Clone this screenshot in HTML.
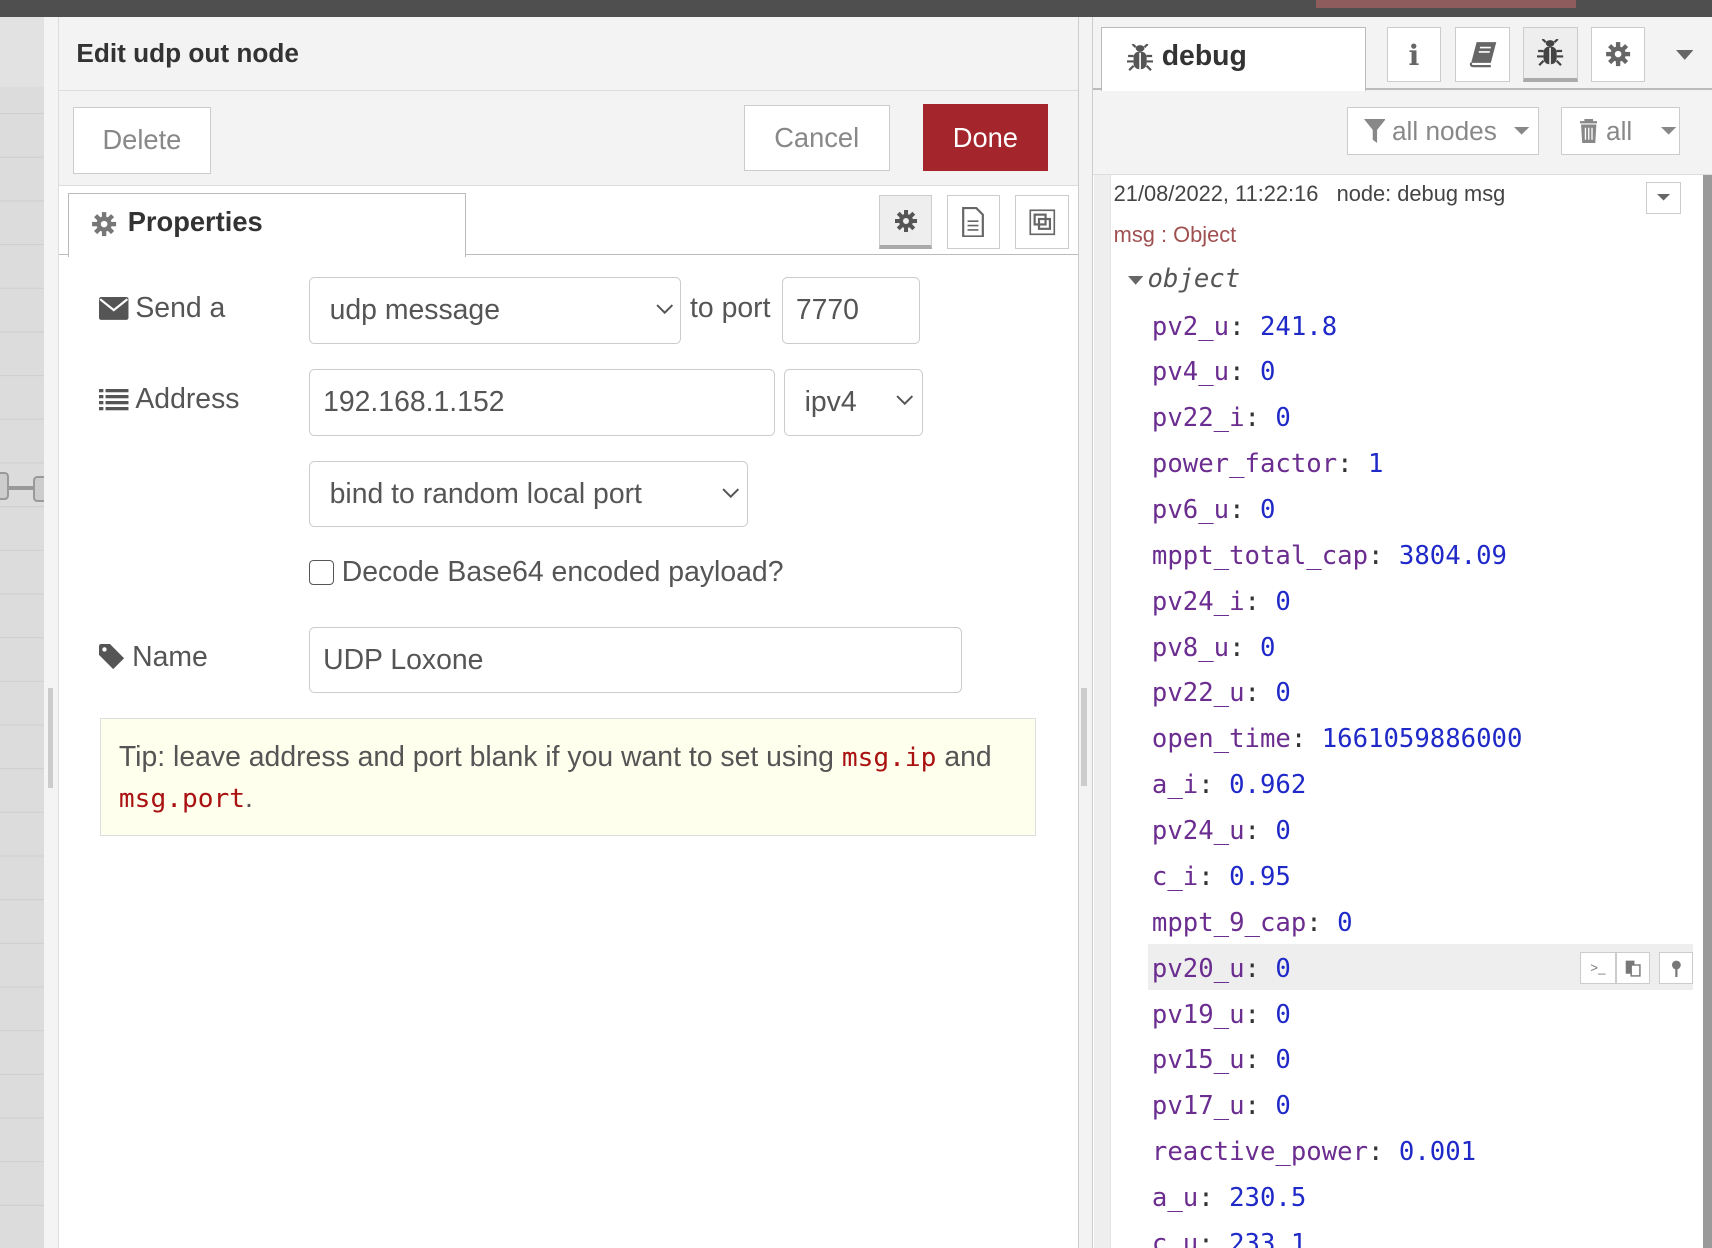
<!DOCTYPE html>
<html><head><style>
html,body{margin:0;padding:0;overflow:hidden;}
body{width:1568px;height:1143px;overflow:hidden;zoom:1.09184;font-family:"Liberation Sans",sans-serif;position:relative;background:#fff;color:#555;}
.a{position:absolute;box-sizing:border-box;}
.btn{border:1px solid #ccc;background:#fff;color:#888;font-size:25px;display:flex;align-items:center;justify-content:center;}
.inp{border:1px solid #ccc;border-radius:5px;background:#fff;font-size:26px;color:#555;display:flex;align-items:center;padding-left:18px;}
.lbl{font-size:26px;color:#555;}
.mono{font-family:"DejaVu Sans Mono","Liberation Mono",monospace;font-size:23.5px;}
.k{color:#6b2d8f}.v{color:#1f29c8}.c{color:#333}
.ib{border:1px solid #ccc;background:#fff;display:flex;align-items:center;justify-content:center;}
</style></head><body>
<div class="a" style="left:0;top:0;width:1568px;height:16px;background:#4f4f4f"></div>
<div class="a" style="left:1205px;top:0;width:238px;height:7px;background:#8e5c5c"></div>
<div class="a" style="left:0;top:16px;width:40px;height:1127px;background:#dcdcdc;background-image:linear-gradient(#cfcfcf 1px,transparent 1px);background-size:40px 40px;background-position:0 8px"></div>
<div class="a" style="left:0;top:16px;width:40px;height:64px;background:#e2e2e2"></div>
<div class="a" style="left:0;top:445px;width:40px;height:4px;background:#999"></div>
<div class="a" style="left:-6px;top:432px;width:14px;height:26px;border:2px solid #999;border-radius:4px;background:#ccc"></div>
<div class="a" style="left:30px;top:436px;width:14px;height:24px;border:2px solid #999;border-radius:4px;background:#ccc"></div>
<div class="a" style="left:40px;top:16px;width:14px;height:1127px;background:#f4f4f4;border-right:1px solid #ddd"></div>
<div class="a" style="left:44px;top:630px;width:5px;height:92px;background:#ccc"></div>
<div class="a" style="left:54px;top:16px;width:933px;height:154px;background:#f3f3f3;border-bottom:1px solid #ddd"></div>
<div class="a" style="left:54px;top:82px;width:933px;height:1px;background:#ddd"></div>
<div class="a" style="left:70px;top:35px;font-size:24px;font-weight:bold;color:#333">Edit udp out node</div>
<div class="a btn" style="left:67px;top:98px;width:126px;height:61px">Delete</div>
<div class="a btn" style="left:681px;top:96px;width:134px;height:61px">Cancel</div>
<div class="a btn" style="left:845px;top:95px;width:115px;height:62px;background:#a4262c;border-color:#a4262c;color:#fff">Done</div>
<div class="a" style="left:54px;top:233px;width:933px;height:1px;background:#bbb"></div>
<div class="a" style="left:62px;top:177px;width:365px;height:58px;background:#fff;border:1px solid #bbb;border-bottom:none"></div>
<svg class="a" style="left:83px;top:193px" width="24" height="24" viewBox="0 0 24 24"><g fill="#777"><circle cx="12" cy="12" r="7"/><rect x="10" y="1" width="4" height="22"/><rect x="1" y="10" width="22" height="4"/><rect x="10" y="1" width="4" height="22" transform="rotate(45 12 12)"/><rect x="10" y="1" width="4" height="22" transform="rotate(-45 12 12)"/></g><circle cx="12" cy="12" r="3" fill="#fff"/></svg>
<div class="a" style="left:117px;top:189px;font-size:25px;font-weight:bold;color:#333">Properties</div>
<div class="a ib" style="left:805px;top:179px;width:49px;height:49px;background:#eee;border-bottom:4px solid #aaa"><svg width="22" height="22" viewBox="0 0 24 24"><g fill="#555"><circle cx="12" cy="12" r="7"/><rect x="10" y="1" width="4" height="22"/><rect x="1" y="10" width="22" height="4"/><rect x="10" y="1" width="4" height="22" transform="rotate(45 12 12)"/><rect x="10" y="1" width="4" height="22" transform="rotate(-45 12 12)"/></g><circle cx="12" cy="12" r="3" fill="#eee"/></svg></div>
<div class="a ib" style="left:867px;top:179px;width:49px;height:49px"><svg width="22" height="28" viewBox="0 0 22 28"><path d="M2 1h12l6 6v20H2z" fill="none" stroke="#666" stroke-width="2"/><path d="M6 13h10M6 17h10M6 21h10" stroke="#666" stroke-width="1.5"/></svg></div>
<div class="a ib" style="left:930px;top:179px;width:49px;height:49px"><svg width="28" height="28" viewBox="0 0 28 28"><rect x="3" y="3" width="22" height="22" fill="none" stroke="#666" stroke-width="1.5"/><rect x="7" y="7" width="10" height="9" fill="none" stroke="#666" stroke-width="2"/><rect x="11" y="11" width="10" height="9" fill="none" stroke="#666" stroke-width="2"/></svg></div>
<svg class="a" style="left:91px;top:272px" width="27" height="21" viewBox="0 0 27 21"><rect width="27" height="21" rx="2" fill="#555"/><path d="M1 2l12.5 10L26 2" fill="none" stroke="#fff" stroke-width="2"/></svg>
<div class="a lbl" style="left:124px;top:267px">Send a</div>
<div class="a inp" style="left:283px;top:254px;width:341px;height:61px">udp message</div>
<div class="a lbl" style="left:632px;top:267px">to port</div>
<div class="a inp" style="left:716px;top:254px;width:127px;height:61px;padding-left:12px">7770</div>
<svg class="a" style="left:91px;top:356px" width="27" height="20" viewBox="0 0 27 20"><g fill="#555"><rect x="0" y="0" width="4" height="3"/><rect x="6" y="0" width="21" height="3"/><rect x="0" y="5.5" width="4" height="3"/><rect x="6" y="5.5" width="21" height="3"/><rect x="0" y="11" width="4" height="3"/><rect x="6" y="11" width="21" height="3"/><rect x="0" y="16.5" width="4" height="3"/><rect x="6" y="16.5" width="21" height="3"/></g></svg>
<div class="a lbl" style="left:124px;top:351px">Address</div>
<div class="a inp" style="left:283px;top:338px;width:427px;height:61px;padding-left:12px">192.168.1.152</div>
<div class="a inp" style="left:718px;top:338px;width:127px;height:61px">ipv4</div>
<div class="a inp" style="left:283px;top:422px;width:402px;height:61px">bind to random local port</div>
<svg class="a" style="left:601px;top:278px" width="16" height="10"><path d="M1 1l7 7 7-7" fill="none" stroke="#555" stroke-width="1.8"/></svg>
<svg class="a" style="left:821px;top:362px" width="16" height="10"><path d="M1 1l7 7 7-7" fill="none" stroke="#555" stroke-width="1.8"/></svg>
<svg class="a" style="left:661px;top:447px" width="16" height="10"><path d="M1 1l7 7 7-7" fill="none" stroke="#555" stroke-width="1.8"/></svg>
<div class="a" style="left:283px;top:513px;width:23px;height:23px;border:1.5px solid #555;border-radius:4px;background:#fff"></div>
<div class="a lbl" style="left:313px;top:509px">Decode Base64 encoded payload?</div>
<svg class="a" style="left:91px;top:590px" width="24" height="24" viewBox="0 0 24 24"><path d="M0 2a2 2 0 0 1 2-2h8l13 13-10 10L0 10z" fill="#555"/><circle cx="5" cy="5" r="2" fill="#fff"/></svg>
<div class="a lbl" style="left:121px;top:587px">Name</div>
<div class="a inp" style="left:283px;top:574px;width:598px;height:61px;padding-left:12px">UDP Loxone</div>
<div class="a" style="left:92px;top:658px;width:857px;height:108px;background:#ffffee;border:1px solid #ddd;padding:16px 16px;font-size:26px;line-height:37px;color:#555">Tip: leave address and port blank if you want to set using <span style="font-family:'DejaVu Sans Mono',monospace;color:#a11;font-size:24px">msg.ip</span> and <span style="font-family:'DejaVu Sans Mono',monospace;color:#a11;font-size:24px">msg.port</span>.</div>
<div class="a" style="left:987px;top:16px;width:14px;height:1127px;background:#f3f3f3;border-left:1px solid #ccc;border-right:1px solid #ccc"></div>
<div class="a" style="left:990px;top:630px;width:6px;height:90px;background:#ccc"></div>
<div class="a" style="left:1001px;top:16px;width:567px;height:144px;background:#f3f3f3;border-bottom:1px solid #ddd"></div>
<div class="a" style="left:1001px;top:81px;width:567px;height:1px;background:#bbb"></div>
<div class="a" style="left:1008px;top:25px;width:243px;height:58px;background:#fff;border:1px solid #bbb;border-bottom:none"></div>
<svg class="a" style="left:1032px;top:40px" width="24" height="26" viewBox="0 0 24 26"><g fill="#555"><ellipse cx="12" cy="4" rx="4" ry="3"/><rect x="6" y="7" width="12" height="16" rx="5"/></g><path d="M12 8v15" stroke="#fff" stroke-width="1.5"/><path d="M6 11H1M6 16H0M6 20l-4 4M18 11h5M18 16h6M18 20l4 4M8 3L5 0M16 3l3-3" stroke="#555" stroke-width="2"/></svg>
<div class="a" style="left:1064px;top:37px;font-size:26px;font-weight:bold;color:#333">debug</div>
<div class="a ib" style="left:1270px;top:25px;width:50px;height:50px;font-family:'DejaVu Serif',serif;font-weight:bold;font-size:26px;color:#666">i</div>
<div class="a ib" style="left:1333px;top:25px;width:50px;height:50px"><svg width="26" height="24" viewBox="0 0 26 24"><path d="M7 1h18l-5 19H2z" fill="#666"/><path d="M2 20q-1 3 2 3h16" fill="none" stroke="#666" stroke-width="2"/><path d="M10 6h10M9 10h10" stroke="#fff" stroke-width="1.5"/></svg></div>
<div class="a ib" style="left:1395px;top:25px;width:50px;height:50px;background:#eee;border-bottom:4px solid #aaa"><svg width="24" height="26" viewBox="0 0 24 26"><g fill="#444"><ellipse cx="12" cy="4" rx="4" ry="3"/><rect x="6" y="7" width="12" height="16" rx="5"/></g><path d="M12 8v15" stroke="#eee" stroke-width="1.5"/><path d="M6 11H1M6 16H0M6 20l-4 4M18 11h5M18 16h6M18 20l4 4M8 3L5 0M16 3l3-3" stroke="#444" stroke-width="2"/></svg></div>
<div class="a ib" style="left:1457px;top:25px;width:50px;height:50px"><svg width="24" height="24" viewBox="0 0 24 24"><g fill="#666"><circle cx="12" cy="12" r="7"/><rect x="10" y="1" width="4" height="22"/><rect x="1" y="10" width="22" height="4"/><rect x="10" y="1" width="4" height="22" transform="rotate(45 12 12)"/><rect x="10" y="1" width="4" height="22" transform="rotate(-45 12 12)"/></g><circle cx="12" cy="12" r="3" fill="#fff"/></svg></div>
<svg class="a" style="left:1535px;top:46px" width="16" height="10"><path d="M0 0h16L8 9z" fill="#666"/></svg>
<div class="a ib" style="left:1234px;top:98px;width:176px;height:44px;color:#888;font-size:24px;justify-content:flex-start;padding-left:14px"><svg width="20" height="22" viewBox="0 0 20 22" style="margin-right:6px"><path d="M0 0h20l-8 10v12l-4-3v-9z" fill="#888"/></svg>all nodes<svg width="14" height="8" style="margin-left:16px"><path d="M0 0h14L7 7z" fill="#888"/></svg></div>
<div class="a ib" style="left:1430px;top:98px;width:109px;height:44px;color:#888;font-size:24px;justify-content:flex-start;padding-left:16px"><svg width="16" height="22" viewBox="0 0 16 22" style="margin-right:8px"><path d="M0 3h16M5 3V1h6v2" stroke="#888" stroke-width="2" fill="none"/><path d="M1 5h14l-1 17H2z" fill="#888"/><path d="M5 8v11M8 8v11M11 8v11" stroke="#fff" stroke-width="1.2"/></svg>all<svg width="14" height="8" style="margin-left:26px"><path d="M0 0h14L7 7z" fill="#888"/></svg></div>
<div class="a" style="left:1002px;top:160px;width:16px;height:983px;background:#eee;border-right:1px solid #e4e4e4"></div>
<div class="a" style="left:1560px;top:160px;width:8px;height:983px;background:#9a9a9a"></div>
<div class="a" style="left:1020px;top:166px;font-size:20px;color:#444">21/08/2022, 11:22:16&nbsp;&nbsp;&nbsp;node: debug msg</div>
<div class="a ib" style="left:1508px;top:167px;width:32px;height:29px"><svg width="12" height="7"><path d="M0 0h12L6 6z" fill="#666"/></svg></div>
<div class="a" style="left:1020px;top:203px;font-size:20px;color:#a05050">msg : Object</div>
<svg class="a" style="left:1033px;top:253px" width="14" height="9"><path d="M0 0h14L7 8z" fill="#666"/></svg>
<div class="a mono" style="left:1051px;top:242px;font-style:italic;color:#555">object</div>
<div class="a" style="left:1051px;top:865px;width:500px;height:42px;background:#eee"></div>
<div class="a" style="left:1447px;top:872px;width:33px;height:29px;border:1px solid #ccc;background:#fff;font-size:12px;color:#777;text-align:center;line-height:27px">&gt;_</div>
<div class="a" style="left:1480px;top:872px;width:31px;height:29px;border:1px solid #ccc;background:#fff"><svg width="29" height="27" viewBox="0 0 29 27"><rect x="8" y="7" width="8" height="12" fill="#777"/><rect x="13" y="11" width="8" height="10" fill="#fff" stroke="#777" stroke-width="1.3"/></svg></div>
<div class="a" style="left:1519px;top:872px;width:32px;height:29px;border:1px solid #ccc;background:#fff"><svg width="30" height="27" viewBox="0 0 30 27"><circle cx="15" cy="11" r="4" fill="#777"/><path d="M15 14v8" stroke="#777" stroke-width="2"/></svg></div>
<div class="a mono" style="left:1055px;top:279px;width:480px;height:864px;overflow:hidden;line-height:42px;white-space:pre"><span class="k">pv2_u</span><span class="c">:</span> <span class="v">241.8</span>
<span class="k">pv4_u</span><span class="c">:</span> <span class="v">0</span>
<span class="k">pv22_i</span><span class="c">:</span> <span class="v">0</span>
<span class="k">power_factor</span><span class="c">:</span> <span class="v">1</span>
<span class="k">pv6_u</span><span class="c">:</span> <span class="v">0</span>
<span class="k">mppt_total_cap</span><span class="c">:</span> <span class="v">3804.09</span>
<span class="k">pv24_i</span><span class="c">:</span> <span class="v">0</span>
<span class="k">pv8_u</span><span class="c">:</span> <span class="v">0</span>
<span class="k">pv22_u</span><span class="c">:</span> <span class="v">0</span>
<span class="k">open_time</span><span class="c">:</span> <span class="v">1661059886000</span>
<span class="k">a_i</span><span class="c">:</span> <span class="v">0.962</span>
<span class="k">pv24_u</span><span class="c">:</span> <span class="v">0</span>
<span class="k">c_i</span><span class="c">:</span> <span class="v">0.95</span>
<span class="k">mppt_9_cap</span><span class="c">:</span> <span class="v">0</span>
<span class="k">pv20_u</span><span class="c">:</span> <span class="v">0</span>
<span class="k">pv19_u</span><span class="c">:</span> <span class="v">0</span>
<span class="k">pv15_u</span><span class="c">:</span> <span class="v">0</span>
<span class="k">pv17_u</span><span class="c">:</span> <span class="v">0</span>
<span class="k">reactive_power</span><span class="c">:</span> <span class="v">0.001</span>
<span class="k">a_u</span><span class="c">:</span> <span class="v">230.5</span>
<span class="k">c_u</span><span class="c">:</span> <span class="v">233.1</span></div>
</body></html>
